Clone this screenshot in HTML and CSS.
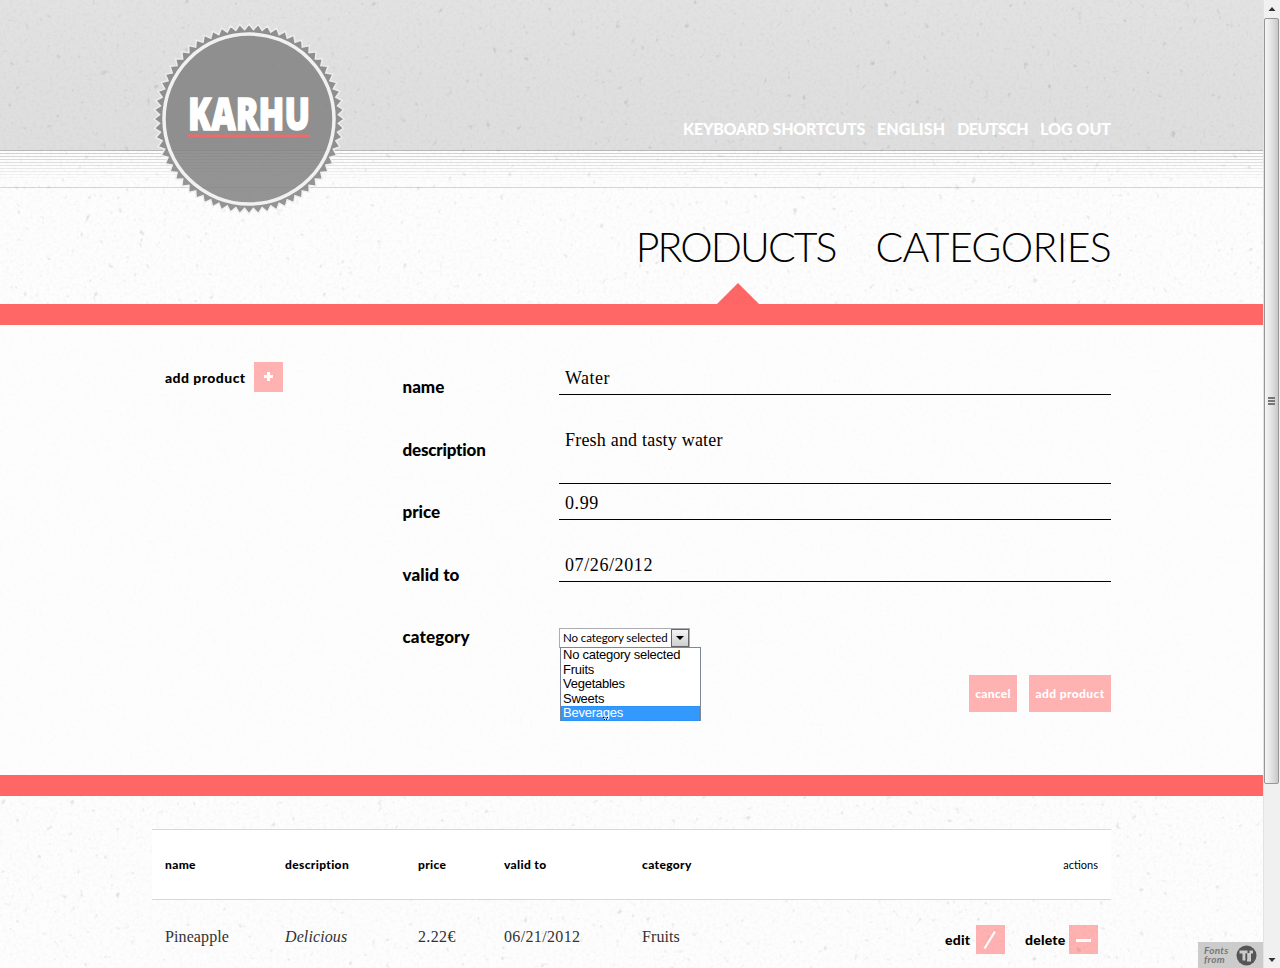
FILE: index.html
```html
<!DOCTYPE html>
<html lang="en">
<head>
<meta charset="utf-8">
<title>Karhu</title>
<link rel="stylesheet" href="styles.css">
</head>
<body>
<div class="viewport">
  <div class="page">
    <header class="top">
      <div class="wrap top-inner">
        <nav class="meta">
          <a class="m1">KEYBOARD SHORTCUTS</a><a class="m2">ENGLISH</a><a class="m3">DEUTSCH</a><a class="m4">LOG OUT</a>
        </nav>
      </div>
    </header>
    <div class="stripes"></div>
    <div class="nav-band">
      <nav class="wrap main-nav">
        <a class="active n1">PRODUCTS</a><a class="n2">CATEGORIES</a>
      </nav>
    </div>
    <div class="bar"></div>
    <section class="form-band">
      <div class="wrap form-layout">
        <div class="add"><span>add product</span><i class="icon"><svg width="29" height="30"><path d="M14.500 10v9M10 14.500h9" stroke="#fff" stroke-width="3"/></svg></i></div>
        <form class="form">
          <div class="row"><label>name</label><div class="field name">Water</div></div>
          <div class="row"><label class="l2">description</label><div class="field area">Fresh and tasty water</div></div>
          <div class="row"><label>price</label><div class="field num">0.99</div></div>
          <div class="row"><label class="l4">valid to</label><div class="field num date">07/26/2012</div></div>
          <div class="row"><label class="l4">category</label>
            <div class="select"><span>No category selected</span><b><svg width="16" height="16"><path d="M4 6h8l-4 4z"/></svg></b>
              <ul class="menu"><li>No category selected</li><li>Fruits</li><li>Vegetables</li><li>Sweets</li><li class="hover">Beverages</li></ul>
              <svg class="pointer" width="5" height="4"><path d="M0 .500h1M4 .500h1M1 2.500h1M3 2.500h1" stroke="#000"/></svg>
            </div>
          </div>
          <div class="buttons"><a class="cancel">cancel</a><a class="submit">add product</a></div>
        </form>
      </div>
    </section>
    <div class="bar"></div>
    <section class="wrap table">
      <div class="tr th"><span>name</span><span>description</span><span>price</span><span>valid to</span><span>category</span><span class="actions">actions</span></div>
      <div class="tr td"><span>Pineapple</span><em>Delicious</em><span class="num">2.22€</span><span class="num">06/21/2012</span><span>Fruits</span>
        <div class="actions">
          <span class="edit">edit</span><i class="icon"><svg width="29" height="29"><path d="M8.500 23.500L19 6.500" stroke="#fff" stroke-width="2.200"/></svg></i>
          <span class="delete">delete</span><i class="icon"><svg width="29" height="29"><path d="M7 15.500h15" stroke="#fff" stroke-width="3"/></svg></i>
        </div>
      </div>
    </section>
    <svg class="grain" width="1263" height="968">
      <filter id="fine" x="0" y="0" width="100%" height="100%"><feTurbulence type="fractalNoise" baseFrequency=".3" numOctaves="3" seed="4"/><feColorMatrix values="0 0 0 0 0  0 0 0 0 0  0 0 0 0 0  .28 0 0 0 -.12"/></filter>
      <filter id="specks" x="0" y="0" width="100%" height="100%"><feTurbulence type="fractalNoise" baseFrequency=".13" numOctaves="2" seed="9"/><feColorMatrix values="0 0 0 0 0  0 0 0 0 0  0 0 0 0 0  2 0 0 0 -1.420"/></filter>
      <g opacity=".5"><rect width="1263" height="325" filter="url(#fine)" opacity=".45"/><rect width="1263" height="325" filter="url(#specks)" opacity=".6"/></g>
      <rect y="325" width="1263" height="450" filter="url(#fine)" opacity=".1"/>
      <g opacity=".5"><rect y="796" width="1263" height="172" filter="url(#fine)" opacity=".45"/><rect y="796" width="1263" height="172" filter="url(#specks)" opacity=".6"/></g>
    </svg>
    <svg class="logo" viewBox="-97 -97 194 194" width="194" height="194">
      <g opacity=".85"><polygon id="seal" fill="#828282" stroke="#f0f0f0" stroke-width="1.500"/></g>
      <circle r="85" fill="none" stroke="#f1f1f1" stroke-width="3.500"/>
      <text class="logo-text" x="-61" y="10.500" textLength="122" lengthAdjust="spacingAndGlyphs">KARHU</text>
      <rect x="-61" y="15.500" width="122" height="2.500" fill="#f06a6c"/>
    </svg>
    <div class="fonts-from"><div><p>Fonts</p><p>from</p></div>
      <svg width="21" height="21"><circle cx="10.500" cy="10.500" r="10" fill="#555"/><path d="M3.500 5.500h8v2.500h2V5.500h3.500v3h-2v8h-4V8.500H9.500v7h-3v-7h-3z" fill="#ccc"/><path d="M10.500 8.500v6" stroke="#555" stroke-width="1.500"/></svg>
    </div>
  </div>
  <div class="scrollbar">
    <svg width="17" height="17"><path d="M4.500 11l3.500-4 3.500 4z" fill="#333"/></svg>
    <div class="thumb"><i></i><i></i><i></i></div>
    <svg class="down" width="17" height="17"><path d="M4.500 7h7L8 11z" fill="#333"/></svg>
  </div>
</div>
<script src="seal.js"></script>
</body>
</html>
```
FILE: seal.js
```js
// Serrated edge of the round logo: 64 teeth.
var points = [];
for (var i = 0; i < 128; i++) {
  var r = i % 2 ? 89.5 : 95;
  var a = i * Math.PI / 64;
  points.push((r * Math.sin(a)).toFixed(2) + ',' + (-r * Math.cos(a)).toFixed(2));
}
document.getElementById('seal').setAttribute('points', points.join(' '));
```
FILE: styles.css
```css
* { box-sizing: border-box; }
body { margin: 0; font-family: Lato, sans-serif; color: #000; overflow: hidden; }
.viewport { display: flex; width: 1280px; height: 968px; overflow: hidden; }
.page { position: relative; width: 1263px; height: 968px; overflow: hidden; background: #fdfdfd; }
.wrap { width: 959px; margin-left: 152px; }
.top { height: 151px; background: linear-gradient(#e2e2e2, #dfdfdf 60%, #dedede); border-bottom: 1px solid #b9b9b9; }
.top-inner { height: 150px; display: flex; justify-content: flex-end; align-items: flex-end; padding-bottom: 11px; }
.meta { display: flex; gap: 12px; color: #fff; font-size: 16px; line-height: 20px; font-weight: 900; white-space: nowrap; position: relative; z-index: 2; }
.m1 { letter-spacing: -.24px; }
.m2 { letter-spacing: .1px; }
.m3 { letter-spacing: -.55px; }
.stripes { height: 37px; border-bottom: 1px solid #d6d6d6; background: linear-gradient(rgba(253,253,253,0), #fdfdfd 85%), repeating-linear-gradient(#fdfdfd 0 2px, #cecece 2px 3px); }
.nav-band { height: 116px; padding-top: 34px; }
.main-nav { display: flex; justify-content: flex-end; gap: 40px; height: 82px; font-size: 41px; line-height: 50px; font-weight: 300; white-space: nowrap; }
.main-nav a { position: relative; }
.n1 { letter-spacing: -1.900px; }
.n2 { letter-spacing: -.7px; }
.active::after { content: ""; position: absolute; left: 81px; top: 61px; border: 21px solid transparent; border-top: 0; border-bottom-color: #f66; }
.bar { height: 21px; background: #f66; position: relative; z-index: 2; }
.form-band { height: 450px; padding-top: 37px; }
.form-layout { display: flex; }
.add { width: 250px; padding-left: 13px; height: 30px; display: flex; align-items: center; gap: 9px; font-size: 14px; font-weight: 900; letter-spacing: .45px; }
.add span { width: 80px; white-space: nowrap; }
.icon { display: block; width: 29px; height: 29px; background: #ffb2b2; }
.add .icon { height: 30px; }
.icon svg { display: block; }
.form { width: 709px; }
.row { height: 62.500px; display: flex; }
.row label { width: 157px; padding: 15px 0 0 .5px; font-size: 17px; line-height: 20px; font-weight: 900; }
.row .l2 { letter-spacing: -.2px; }
.row .l4 { letter-spacing: .1px; }
.field { width: 552px; height: 33px; border-bottom: 1px solid #000; padding: 6px 6px 0; font: 18px/20px "Liberation Serif", serif; letter-spacing: .2px; }
.row .name { letter-spacing: .5px; }
.area { height: 59.500px; padding-top: 5px; }
.num { letter-spacing: .6px; }
.date { height: 32.500px; padding-top: 5.500px; }
.select { position: relative; display: flex; justify-content: space-between; width: 131px; height: 20px; margin-top: 16px; border: 1px solid #abadb3; background: #fff; font-size: 11.500px; letter-spacing: -.1px; line-height: 18px; padding-left: 3px; white-space: nowrap; }
.select b { width: 18px; height: 18px; border: 1px solid #666; background: linear-gradient(#f4f4f4, #cfcfcf); }
.select svg { display: block; }
.menu { position: absolute; z-index: 3; left: 0; top: 18px; width: 141px; height: 74px; margin: 0; padding: 0; list-style: none; border: 1px solid #7c8799; background: #fff; font: 13px/14.500px "Liberation Sans", sans-serif; letter-spacing: -.25px; }
.menu li { padding-left: 2px; height: 14.500px; }
.menu .hover { background: #39f; color: #fff; outline: 1px dotted #c06a10; outline-offset: -1px; }
.pointer { position: absolute; z-index: 4; left: 43px; top: 88px; }
.buttons { display: flex; justify-content: flex-end; gap: 12px; }
.buttons a { height: 37px; width: 48px; background: #ffb2b2; color: #fff; font-size: 12px; line-height: 37px; font-weight: 900; text-align: center; white-space: nowrap; letter-spacing: .25px; }
.buttons .submit { width: 82px; letter-spacing: .4px; }
.table { padding-top: 33px; }
.tr { display: grid; grid-template-columns: 120px 133px 86px 138px 1fr auto; padding: 0 13px; align-items: center; }
.th { height: 71px; background: #fff; border: solid #d8d8d8; border-width: 1px 0; font-size: 12px; font-weight: 900; letter-spacing: .35px; position: relative; z-index: 2; }
.th .actions { font-size: 11px; font-weight: 400; letter-spacing: 0; }
.td { height: 80px; font: 16px/20px "Liberation Serif", serif; color: #333; padding-bottom: 7px; letter-spacing: .1px; }
.td .num { letter-spacing: .35px; }
.td .actions { display: flex; align-items: center; padding-top: 6px; font: 900 14px Lato, sans-serif; letter-spacing: .2px; color: #000; }
.edit { width: 31px; }
.delete { width: 44px; margin-left: 20px; }
.grain { position: absolute; left: 0; top: 0; pointer-events: none; }
.logo { position: absolute; left: 151.500px; top: 22px; z-index: 2; overflow: visible; }
.logo-text { font: 900 45px "Open Sans", sans-serif; fill: #fff; stroke: #fff; stroke-width: 1.500px; }
.fonts-from { position: absolute; z-index: 4; right: 0; bottom: 0; width: 65px; height: 26px; background: #ccc; color: #777; display: flex; align-items: center; justify-content: space-between; padding: 0 6px; font: italic 700 10px/9px Lato, sans-serif; }
.fonts-from p { margin: 0; letter-spacing: .3px; }
.scrollbar { width: 17px; height: 968px; background: #f0f0f0; border-left: 1px solid #e3e3e3; display: flex; flex-direction: column; }
.scrollbar svg { display: block; }
.thumb { width: 15px; height: 766px; margin-top: 1px; border: 1px solid #969696; border-radius: 2px; background: linear-gradient(90deg, #f6f6f6, #e5e5e5 45%, #c8c8c8); display: flex; flex-direction: column; align-items: center; justify-content: center; gap: 1px; }
.thumb i { width: 7px; height: 2px; background: #777; }
.down { margin-top: auto; }
```
